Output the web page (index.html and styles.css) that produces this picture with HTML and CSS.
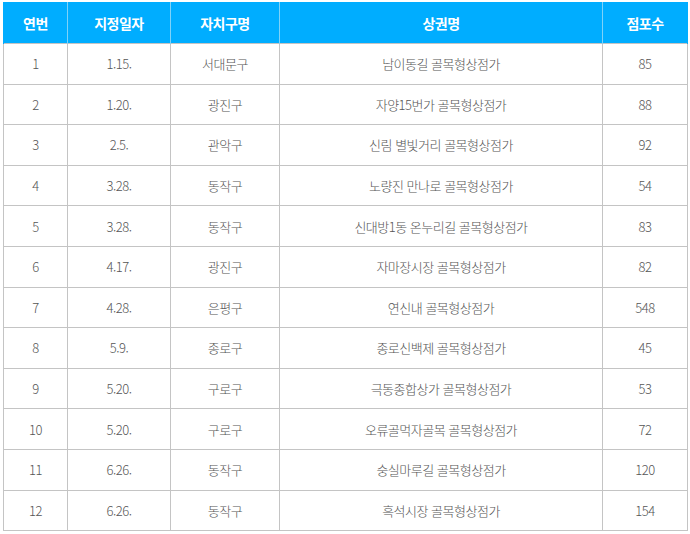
FILE: index.html
```html
<!DOCTYPE html>
<html lang="ko">
<head>
<meta charset="utf-8">
<link rel="stylesheet" href="styles.css">
</head>
<body>
<table class="list">
  <colgroup>
    <col class="c-no"><col class="c-date"><col class="c-gu"><col class="c-name"><col class="c-cnt">
  </colgroup>
  <thead>
    <tr><th>연번</th><th>지정일자</th><th>자치구명</th><th>상권명</th><th>점포수</th></tr>
  </thead>
  <tbody>
    <tr><td>1</td><td>1.15.</td><td>서대문구</td><td>남이동길 골목형상점가</td><td>85</td></tr>
    <tr><td>2</td><td>1.20.</td><td>광진구</td><td>자양15번가 골목형상점가</td><td>88</td></tr>
    <tr><td>3</td><td>2.5.</td><td>관악구</td><td>신림 별빛거리 골목형상점가</td><td>92</td></tr>
    <tr><td>4</td><td>3.28.</td><td>동작구</td><td>노량진 만나로 골목형상점가</td><td>54</td></tr>
    <tr><td>5</td><td>3.28.</td><td>동작구</td><td>신대방1동 온누리길 골목형상점가</td><td>83</td></tr>
    <tr><td>6</td><td>4.17.</td><td>광진구</td><td>자마장시장 골목형상점가</td><td>82</td></tr>
    <tr><td>7</td><td>4.28.</td><td>은평구</td><td>연신내 골목형상점가</td><td>548</td></tr>
    <tr><td>8</td><td>5.9.</td><td>종로구</td><td>종로신백제 골목형상점가</td><td>45</td></tr>
    <tr><td>9</td><td>5.20.</td><td>구로구</td><td>극동종합상가 골목형상점가</td><td>53</td></tr>
    <tr><td>10</td><td>5.20.</td><td>구로구</td><td>오류골먹자골목 골목형상점가</td><td>72</td></tr>
    <tr><td>11</td><td>6.26.</td><td>동작구</td><td>숭실마루길 골목형상점가</td><td>120</td></tr>
    <tr><td>12</td><td>6.26.</td><td>동작구</td><td>흑석시장 골목형상점가</td><td>154</td></tr>
  </tbody>
</table>
</body>
</html>
```
FILE: styles.css
```css
html, body {
  margin: 0;
  padding: 0;
  background: #fff;
}
body {
  padding: 2px 0 0 3px;
  font-family: "Noto Sans CJK KR", "Noto Sans", sans-serif;
}
.list {
  border-collapse: collapse;
  table-layout: fixed;
  width: 684px;
}
.c-no { width: 64px; }
.c-date { width: 103px; }
.c-gu { width: 109px; }
.c-name { width: 323px; }
.c-cnt { width: 85px; }
.list th {
  background: #00adff;
  color: #fff;
  font-size: 14px;
  font-weight: 700;
  height: 41px;
  padding: 0;
  border-left: 1px solid #7fd2f8;
  text-align: center;
  letter-spacing: -0.5px;
}
.list th:first-child { border-left: 1px solid #00adff; }
.list th:last-child { border-right: 1px solid #00adff; }
.list td {
  height: 39.6px;
  padding: 0;
  border: 1px solid #c4c4c4;
  text-align: center;
  color: #555;
  font-size: 13px;
  font-weight: 300;
  letter-spacing: -0.5px;
}
```
